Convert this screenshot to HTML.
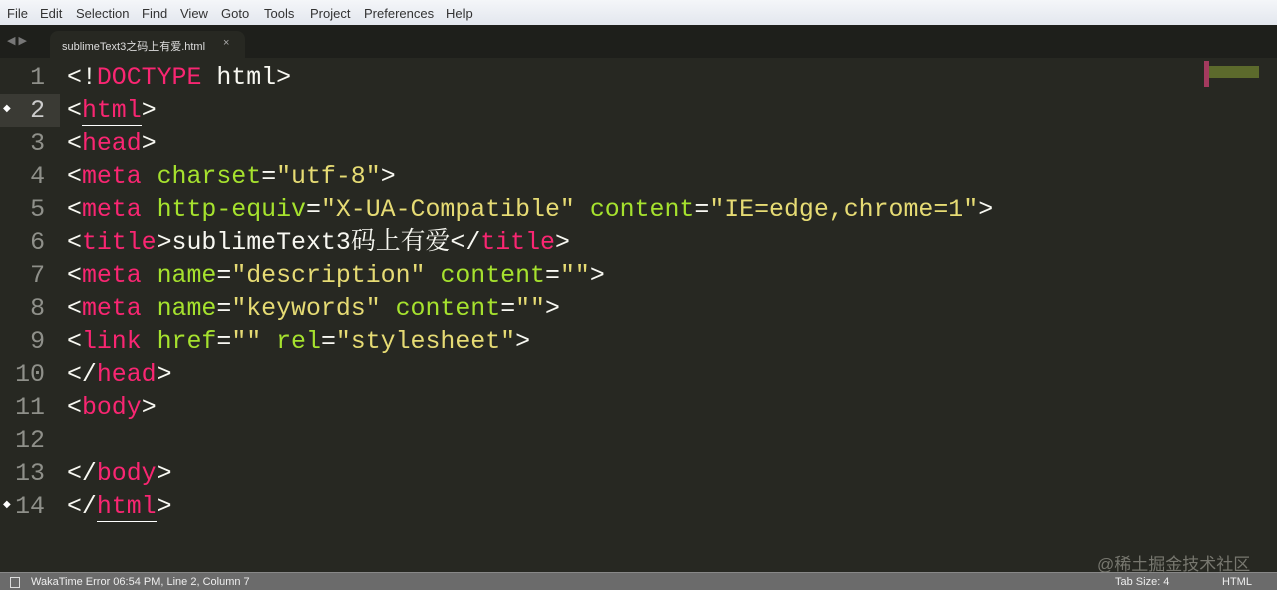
<!DOCTYPE html>
<html><head><meta charset="utf-8"><style>
body{margin:0;width:1277px;height:589px;overflow:hidden;background:#272822;font-family:"Liberation Sans",sans-serif;position:relative}
.menu{position:absolute;top:0;left:0;width:1277px;height:25px;background:linear-gradient(#f4f6f9,#e3e7ee);border-bottom:1px solid #c8ccd2;font-size:13px;color:#333}
.menu span{position:absolute;top:6px}
.tabs{position:absolute;top:25px;left:0;width:1277px;height:33px;background:#1e1f1b}
.tab{position:absolute;left:50px;top:6px;width:195px;height:27px;background:#272822;border-radius:8px 8px 0 0;color:#ddd;font-size:11px;font-family:"Liberation Sans","Noto Sans CJK SC",sans-serif}
.code{position:absolute;left:0;top:62px;font-family:"Liberation Mono",monospace;font-size:24.9px;line-height:33px;color:#f8f8f2}
.ln{position:absolute;left:0;width:45px;text-align:right;color:#8f908a}
.tx{position:absolute;left:67px;white-space:pre;height:33px}
.p{color:#f92672}.g{color:#a6e22e}.y{color:#e6db74}
.cj{font-family:"Noto Serif CJK SC",serif;line-height:0}
.status{position:absolute;left:0;top:572px;width:1277px;height:17px;background:#6b6b6b;border-top:1px solid #888;color:#eee;font-size:11px}
.status span{position:absolute;top:3px}
</style></head><body>
<div class="menu"><span style="left:7px">File</span><span style="left:40px">Edit</span><span style="left:76px">Selection</span><span style="left:142px">Find</span><span style="left:180px">View</span><span style="left:221px">Goto</span><span style="left:264px">Tools</span><span style="left:310px">Project</span><span style="left:364px">Preferences</span><span style="left:446px">Help</span></div>
<div class="tabs"><span style="position:absolute;left:7px;top:9px;color:#777;font-size:11px">◀ ▶</span>
<div class="tab"><span style="position:absolute;left:12px;top:7px">sublimeText3之码上有爱.html</span><span style="position:absolute;left:173px;top:6px;color:#aaa">×</span></div></div>
<div style="position:absolute;left:0;top:94px;width:60px;height:33px;background:#3a3a34"></div>
<div style="position:absolute;left:1204px;top:61px;width:5px;height:26px;background:#a33a5e"></div>
<div style="position:absolute;left:1209px;top:66px;width:50px;height:12px;background:#5c6a2c"></div>
<div class="code">
<div class="ln" style="top:0">1</div><div class="tx" style="top:0">&lt;!<span class="p">DOCTYPE</span> html&gt;</div>
<div class="ln" style="top:33px;color:#ccc">2</div><div class="tx" style="top:33px">&lt;<span class="p" style="border-bottom:1px solid #fff">html</span>&gt;</div>
<div class="ln" style="top:66px">3</div><div class="tx" style="top:66px">&lt;<span class="p">head</span>&gt;</div>
<div class="ln" style="top:99px">4</div><div class="tx" style="top:99px">&lt;<span class="p">meta</span> <span class="g">charset</span>=<span class="y">"utf-8"</span>&gt;</div>
<div class="ln" style="top:132px">5</div><div class="tx" style="top:132px">&lt;<span class="p">meta</span> <span class="g">http-equiv</span>=<span class="y">"X-UA-Compatible"</span> <span class="g">content</span>=<span class="y">"IE=edge,chrome=1"</span>&gt;</div>
<div class="ln" style="top:165px">6</div><div class="tx" style="top:165px">&lt;<span class="p">title</span>&gt;sublimeText3<span class="cj">码上有爱</span>&lt;/<span class="p">title</span>&gt;</div>
<div class="ln" style="top:198px">7</div><div class="tx" style="top:198px">&lt;<span class="p">meta</span> <span class="g">name</span>=<span class="y">"description"</span> <span class="g">content</span>=<span class="y">""</span>&gt;</div>
<div class="ln" style="top:231px">8</div><div class="tx" style="top:231px">&lt;<span class="p">meta</span> <span class="g">name</span>=<span class="y">"keywords"</span> <span class="g">content</span>=<span class="y">""</span>&gt;</div>
<div class="ln" style="top:264px">9</div><div class="tx" style="top:264px">&lt;<span class="p">link</span> <span class="g">href</span>=<span class="y">""</span> <span class="g">rel</span>=<span class="y">"stylesheet"</span>&gt;</div>
<div class="ln" style="top:297px">10</div><div class="tx" style="top:297px">&lt;/<span class="p">head</span>&gt;</div>
<div class="ln" style="top:330px">11</div><div class="tx" style="top:330px">&lt;<span class="p">body</span>&gt;</div>
<div class="ln" style="top:363px">12</div>
<div class="ln" style="top:396px">13</div><div class="tx" style="top:396px">&lt;/<span class="p">body</span>&gt;</div>
<div class="ln" style="top:429px">14</div><div class="tx" style="top:429px">&lt;/<span class="p" style="border-bottom:1px solid #fff">html</span>&gt;</div>
</div>
<span style="position:absolute;left:3px;top:103px;color:#fff;font-size:10px">◆</span>
<span style="position:absolute;left:3px;top:499px;color:#fff;font-size:10px">◆</span>
<div style="position:absolute;left:1097px;top:550px;color:#77776f;font-size:17px;font-family:'Liberation Sans','Noto Sans CJK SC',sans-serif">@稀土掘金技术社区</div>
<div class="status"><span style="left:10px;width:8px;height:9px;border:1px solid #ddd;top:4px"></span><span style="left:31px">WakaTime Error 06:54 PM, Line 2, Column 7</span><span style="left:1115px">Tab Size: 4</span><span style="left:1222px">HTML</span></div>
</body></html>
